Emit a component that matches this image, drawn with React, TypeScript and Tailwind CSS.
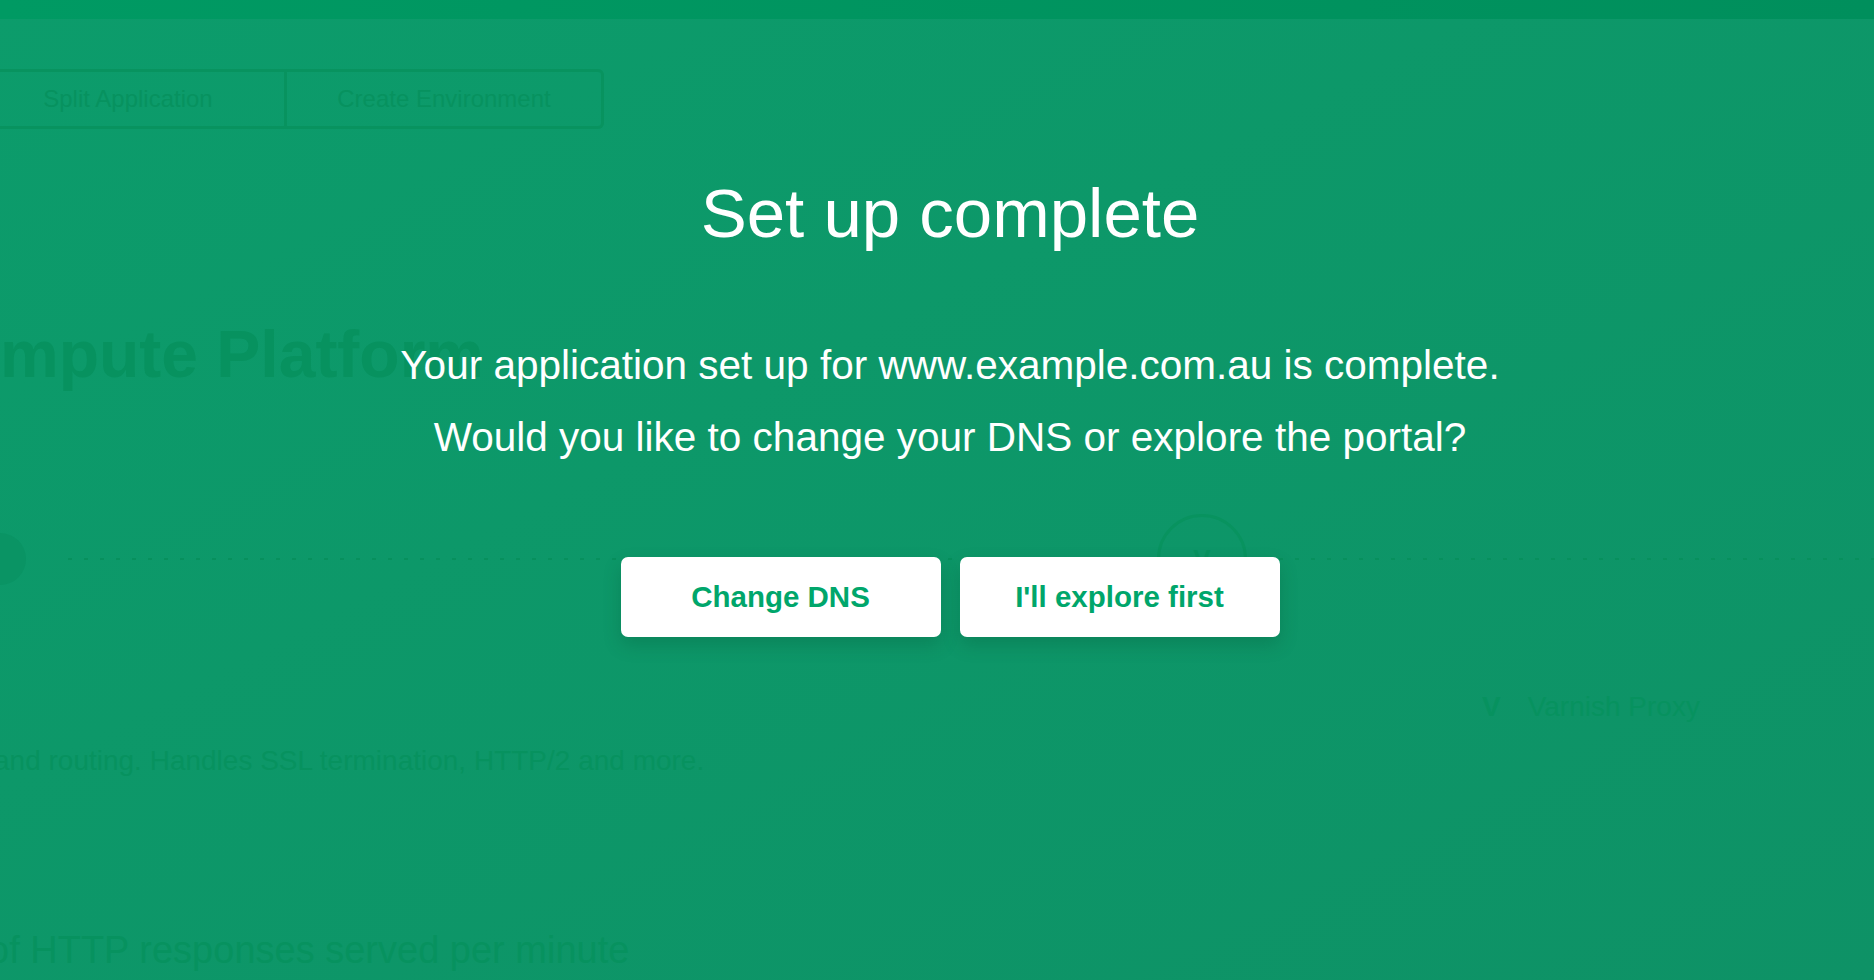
import React from "react"

const fade = "text-[#07925f]"

function BackgroundPage() {
  return (
    <div className="flex flex-col w-full h-full overflow-hidden bg-linear-to-br from-[#0c9c6b] to-[#0e9266] font-['Liberation_Sans',Arial,sans-serif]">
      {/* top bar */}
      <div className="h-[19px] shrink-0 bg-linear-to-r from-[#009a63] to-[#008f5c]" />

      {/* action tabs */}
      <div className="flex mt-[50px] ml-[-31px]">
        <div className={`w-[318px] h-[60px] flex items-center justify-center border-[3px] border-[#08935f] text-[24px] ${fade}`}>
          Split Application
        </div>
        <div className={`w-[317px] h-[60px] flex items-center justify-center border-[3px] border-l-0 border-[#08935f] rounded-r-[6px] text-[24px] ${fade}`}>
          Create Environment
        </div>
      </div>

      {/* heading */}
      <h1 className={`mt-[192px] ml-[-88px] text-[66px] leading-none font-bold whitespace-nowrap ${fade}`}>
        Compute Platform
      </h1>

      {/* pipeline diagram */}
      <div className="flex items-center mt-[127px] h-[90px]">
        <div className="w-[52px] h-[52px] ml-[-26px] shrink-0 rounded-full bg-[#0a9464]" />
        <div className="w-[1089px] shrink-0 ml-[42px] h-[2px] bg-[repeating-linear-gradient(90deg,#07905d_0_4px,transparent_4px_16px)]" />
        <div className={`w-[90px] h-[90px] shrink-0 rounded-full border-[3px] border-[#08935f] flex items-center justify-center text-[26px] font-bold ${fade}`}>
          V
        </div>
        <div className="flex-1 h-[2px] bg-[repeating-linear-gradient(90deg,#07905d_0_4px,transparent_4px_16px)]" />
      </div>

      <div className={`flex items-center gap-[27px] mt-[85px] pl-[1482px] text-[28px] leading-[36px] whitespace-nowrap ${fade}`}>
        <span className="font-bold">V</span>
        <span>Varnish Proxy</span>
      </div>

      <p className={`mt-[18px] ml-[-6px] text-[28px] leading-[36px] whitespace-nowrap ${fade}`}>
        and routing. Handles SSL termination, HTTP/2 and more.
      </p>

      <p className={`mt-[148px] ml-[-12px] text-[38px] leading-[46px] whitespace-nowrap ${fade}`}>
        of HTTP responses served per minute
      </p>
    </div>
  )
}

export default function App() {
  return (
    <div className="relative w-full h-[980px] overflow-hidden">
      <BackgroundPage />

      {/* completion modal */}
      <div className="absolute inset-0 flex flex-col items-center pl-[26px] text-white font-['Liberation_Sans',Arial,sans-serif]">
        <h2 className="mt-[179px] text-[69px] leading-none font-medium">Set up complete</h2>
        <p className="mt-[97px] text-[40.5px] leading-none">
          Your application set up for www.example.com.au is complete.
        </p>
        <p className="mt-[31px] text-[40.5px] leading-none">
          Would you like to change your DNS or explore the portal?
        </p>
        <div className="flex gap-[19px] mt-[100px]">
          <button className="w-[320px] h-[80px] rounded-[7px] bg-white text-[#00a66b] text-[29.5px] font-bold shadow-[0_8px_18px_rgba(0,70,40,0.22)]">
            Change DNS
          </button>
          <button className="w-[320px] h-[80px] rounded-[7px] bg-white text-[#00a66b] text-[29.5px] font-bold shadow-[0_8px_18px_rgba(0,70,40,0.22)]">
            I'll explore first
          </button>
        </div>
      </div>
    </div>
  )
}
